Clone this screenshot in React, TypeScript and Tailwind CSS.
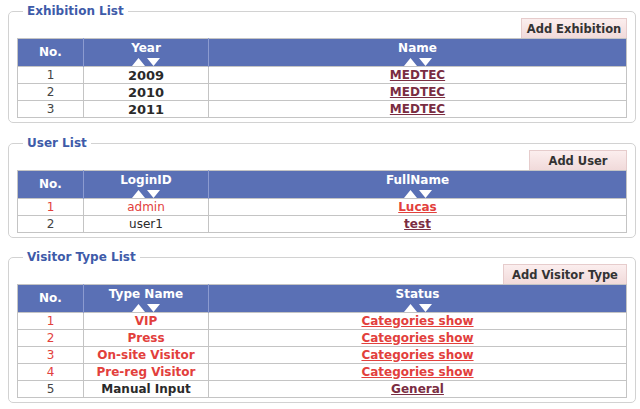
import React from 'react';

type Cell = { text: string; link?: boolean };
type Row = { no: string; red?: boolean; a: Cell; b: Cell };

interface SectionProps {
	title: string;
	button: string;
	buttonWidth: string;
	cols: [string, string];
	aClass: string;
	rows: Row[];
	className?: string;
}

const RED = 'text-[#e2403c]';
const DARK = 'text-[#2a2a2a]';
const MAROON = 'text-[#7a2d42]';

// little white up/down sort arrows under the header label
const SortArrows = () => (
	<svg width="28" height="8" viewBox="0 0 28 8" className="mx-auto mt-[3px] block">
		<polygon points="0,8 6.5,0 13,8" fill="#fff" />
		<polygon points="15,0 28,0 21.5,8" fill="#fff" />
	</svg>
);

const Section: React.FC<SectionProps> = ({ title, button, buttonWidth, cols, aClass, rows, className }) => {
	return (
		<fieldset className={`ml-2 mr-[4px] rounded-[5px] border border-[#d2d2d2] pl-2 pr-[8px] pb-[4px] ${className ?? ''}`}>
			<legend className="ml-[6px] px-[4px] text-[12px] leading-[14px] font-bold text-[#3e5ba9]">{title}</legend>
			<div className="flex justify-end">
				<button
					className={`h-[20px] ${buttonWidth} border border-b-0 border-[#e6cccc] bg-gradient-to-b from-[#fbeeee] to-[#f1dada] text-[11.5px] leading-[18px] font-bold text-[#333]`}
				>
					{button}
				</button>
			</div>
			<table className="w-full border-collapse border border-[#c4c4c4] text-center">
				<thead>
					<tr className="h-[28px] bg-[#5a70b5] text-[12px] leading-[13px] font-bold text-white">
						<th className="w-[66px] border-r border-[#8c9bd0] font-bold">No.</th>
						<th className="w-[125px] border-r border-[#8c9bd0] pt-[3px] align-top font-bold">
							{cols[0]}
							<SortArrows />
						</th>
						<th className="pt-[3px] align-top font-bold">
							{cols[1]}
							<SortArrows />
						</th>
					</tr>
				</thead>
				<tbody>
					{rows.map((r) => (
						<tr key={r.no} className="h-[17px] bg-white">
							<td className={`border border-[#c4c4c4] p-0 text-[12px] leading-[15px] ${r.red ? RED : 'text-[#444]'}`}>
								{r.no}
							</td>
							<td className={`border border-[#c4c4c4] p-0 leading-[15px] ${aClass} ${r.red ? RED : DARK}`}>
								{r.a.text}
							</td>
							<td className="border border-[#c4c4c4] p-0 text-[12px] leading-[15px] font-bold">
								<a href="#" className={`underline ${r.red ? RED : MAROON}`}>
									{r.b.text}
								</a>
							</td>
						</tr>
					))}
				</tbody>
			</table>
		</fieldset>
	);
};

export default function App() {
	return (
		<div className="min-h-[409px] w-[640px] bg-white pt-[4px] font-['DejaVu_Sans',sans-serif]">
			<Section
				title="Exhibition List"
				button="Add Exhibition"
				buttonWidth="w-[106px]"
				cols={['Year', 'Name']}
				aClass="text-[13px] font-bold"
				rows={[
					{ no: '1', a: { text: '2009' }, b: { text: 'MEDTEC', link: true } },
					{ no: '2', a: { text: '2010' }, b: { text: 'MEDTEC', link: true } },
					{ no: '3', a: { text: '2011' }, b: { text: 'MEDTEC', link: true } },
				]}
			/>
			<Section
				className="mt-[13px]"
				title="User List"
				button="Add User"
				buttonWidth="w-[98px]"
				cols={['LoginID', 'FullName']}
				aClass="text-[12px]"
				rows={[
					{ no: '1', red: true, a: { text: 'admin' }, b: { text: 'Lucas', link: true } },
					{ no: '2', a: { text: 'user1' }, b: { text: 'test', link: true } },
				]}
			/>
			<Section
				className="mt-[12px]"
				title="Visitor Type List"
				button="Add Visitor Type"
				buttonWidth="w-[124px]"
				cols={['Type Name', 'Status']}
				aClass="text-[12px] font-bold"
				rows={[
					{ no: '1', red: true, a: { text: 'VIP' }, b: { text: 'Categories show', link: true } },
					{ no: '2', red: true, a: { text: 'Press' }, b: { text: 'Categories show', link: true } },
					{ no: '3', red: true, a: { text: 'On-site Visitor' }, b: { text: 'Categories show', link: true } },
					{ no: '4', red: true, a: { text: 'Pre-reg Visitor' }, b: { text: 'Categories show', link: true } },
					{ no: '5', a: { text: 'Manual Input' }, b: { text: 'General', link: true } },
				]}
			/>
		</div>
	);
}
